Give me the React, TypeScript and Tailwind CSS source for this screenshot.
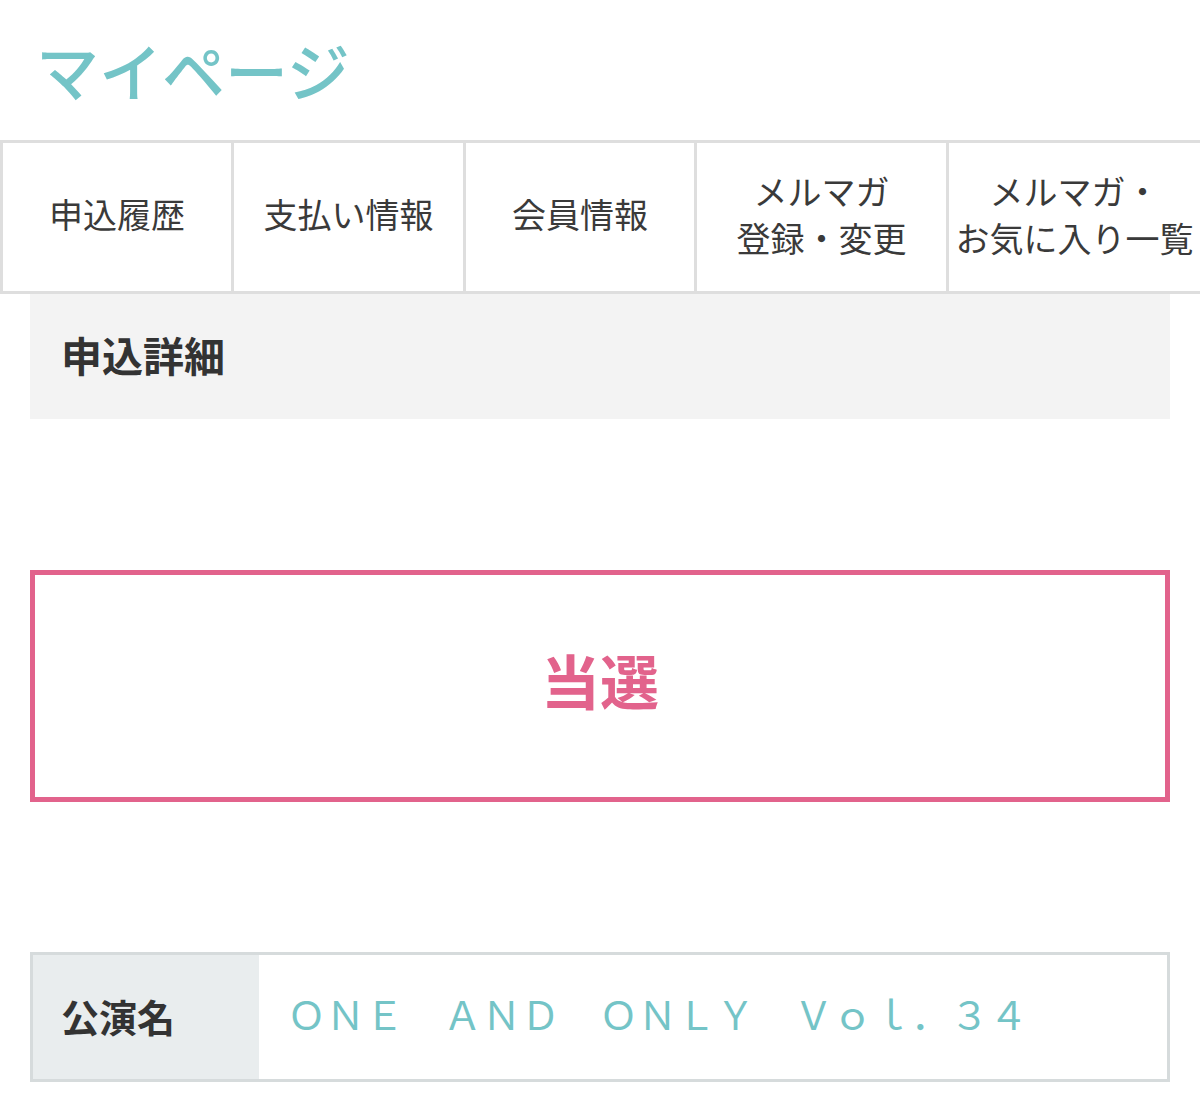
const tabs = [
  { label: ["申込履歴"], w: "w-[231px]" },
  { label: ["支払い情報"], w: "w-[232px]" },
  { label: ["会員情報"], w: "w-[231px]" },
  { label: ["メルマガ", "登録・変更"], w: "w-[252px]" },
  { label: ["メルマガ・", "お気に入り一覧"], w: "flex-1" },
];

export default function App() {
  return (
    <div className="w-[1200px] min-h-[1111px] bg-white font-['Noto_Sans_CJK_JP',sans-serif] text-[#333]">
      <h1 className="pl-[36px] pt-[24px] h-[140px] text-[63px] leading-[90px] font-medium text-[#74c4c7]">
        マイページ
      </h1>

      <nav className="flex h-[154px] border-y-[3px] border-[#dedede]">
        {tabs.map((t, i) => (
          <div
            key={i}
            className={`${t.w} flex flex-col items-center justify-center pb-[7px] border-l-[3px] border-[#dedede] text-[34px] leading-[47px] text-[#3a3a3a] whitespace-nowrap`}
          >
            {t.label.map((l) => (
              <span key={l}>{l}</span>
            ))}
          </div>
        ))}
      </nav>

      <div className="mx-[30px] h-[125px] bg-[#f3f3f3] flex items-center pl-[31px] pb-[4px]">
        <h2 className="text-[41px] font-bold text-[#333]">申込詳細</h2>
      </div>

      <div className="mx-[30px] mt-[151px] h-[232px] border-[5px] border-[#e2638c] flex items-center justify-center pb-[12px]">
        <span className="text-[59px] font-bold text-[#e2638c]">当選</span>
      </div>

      <div className="mx-[30px] mt-[150px] h-[130px] border-[3px] border-[#d6dbdc] flex">
        <div className="w-[226px] bg-[#e9edee] flex items-center pl-[28px] pb-[4px]">
          <span className="text-[38px] font-bold text-[#333]">公演名</span>
        </div>
        <div className="flex-1 flex items-center pl-[28px] pb-[8px]">
          <span className="text-[39px] text-[#74c4c7] whitespace-nowrap">
            ＯＮＥ　ＡＮＤ　ＯＮＬＹ　Ｖｏｌ．３４
          </span>
        </div>
      </div>
    </div>
  );
}
